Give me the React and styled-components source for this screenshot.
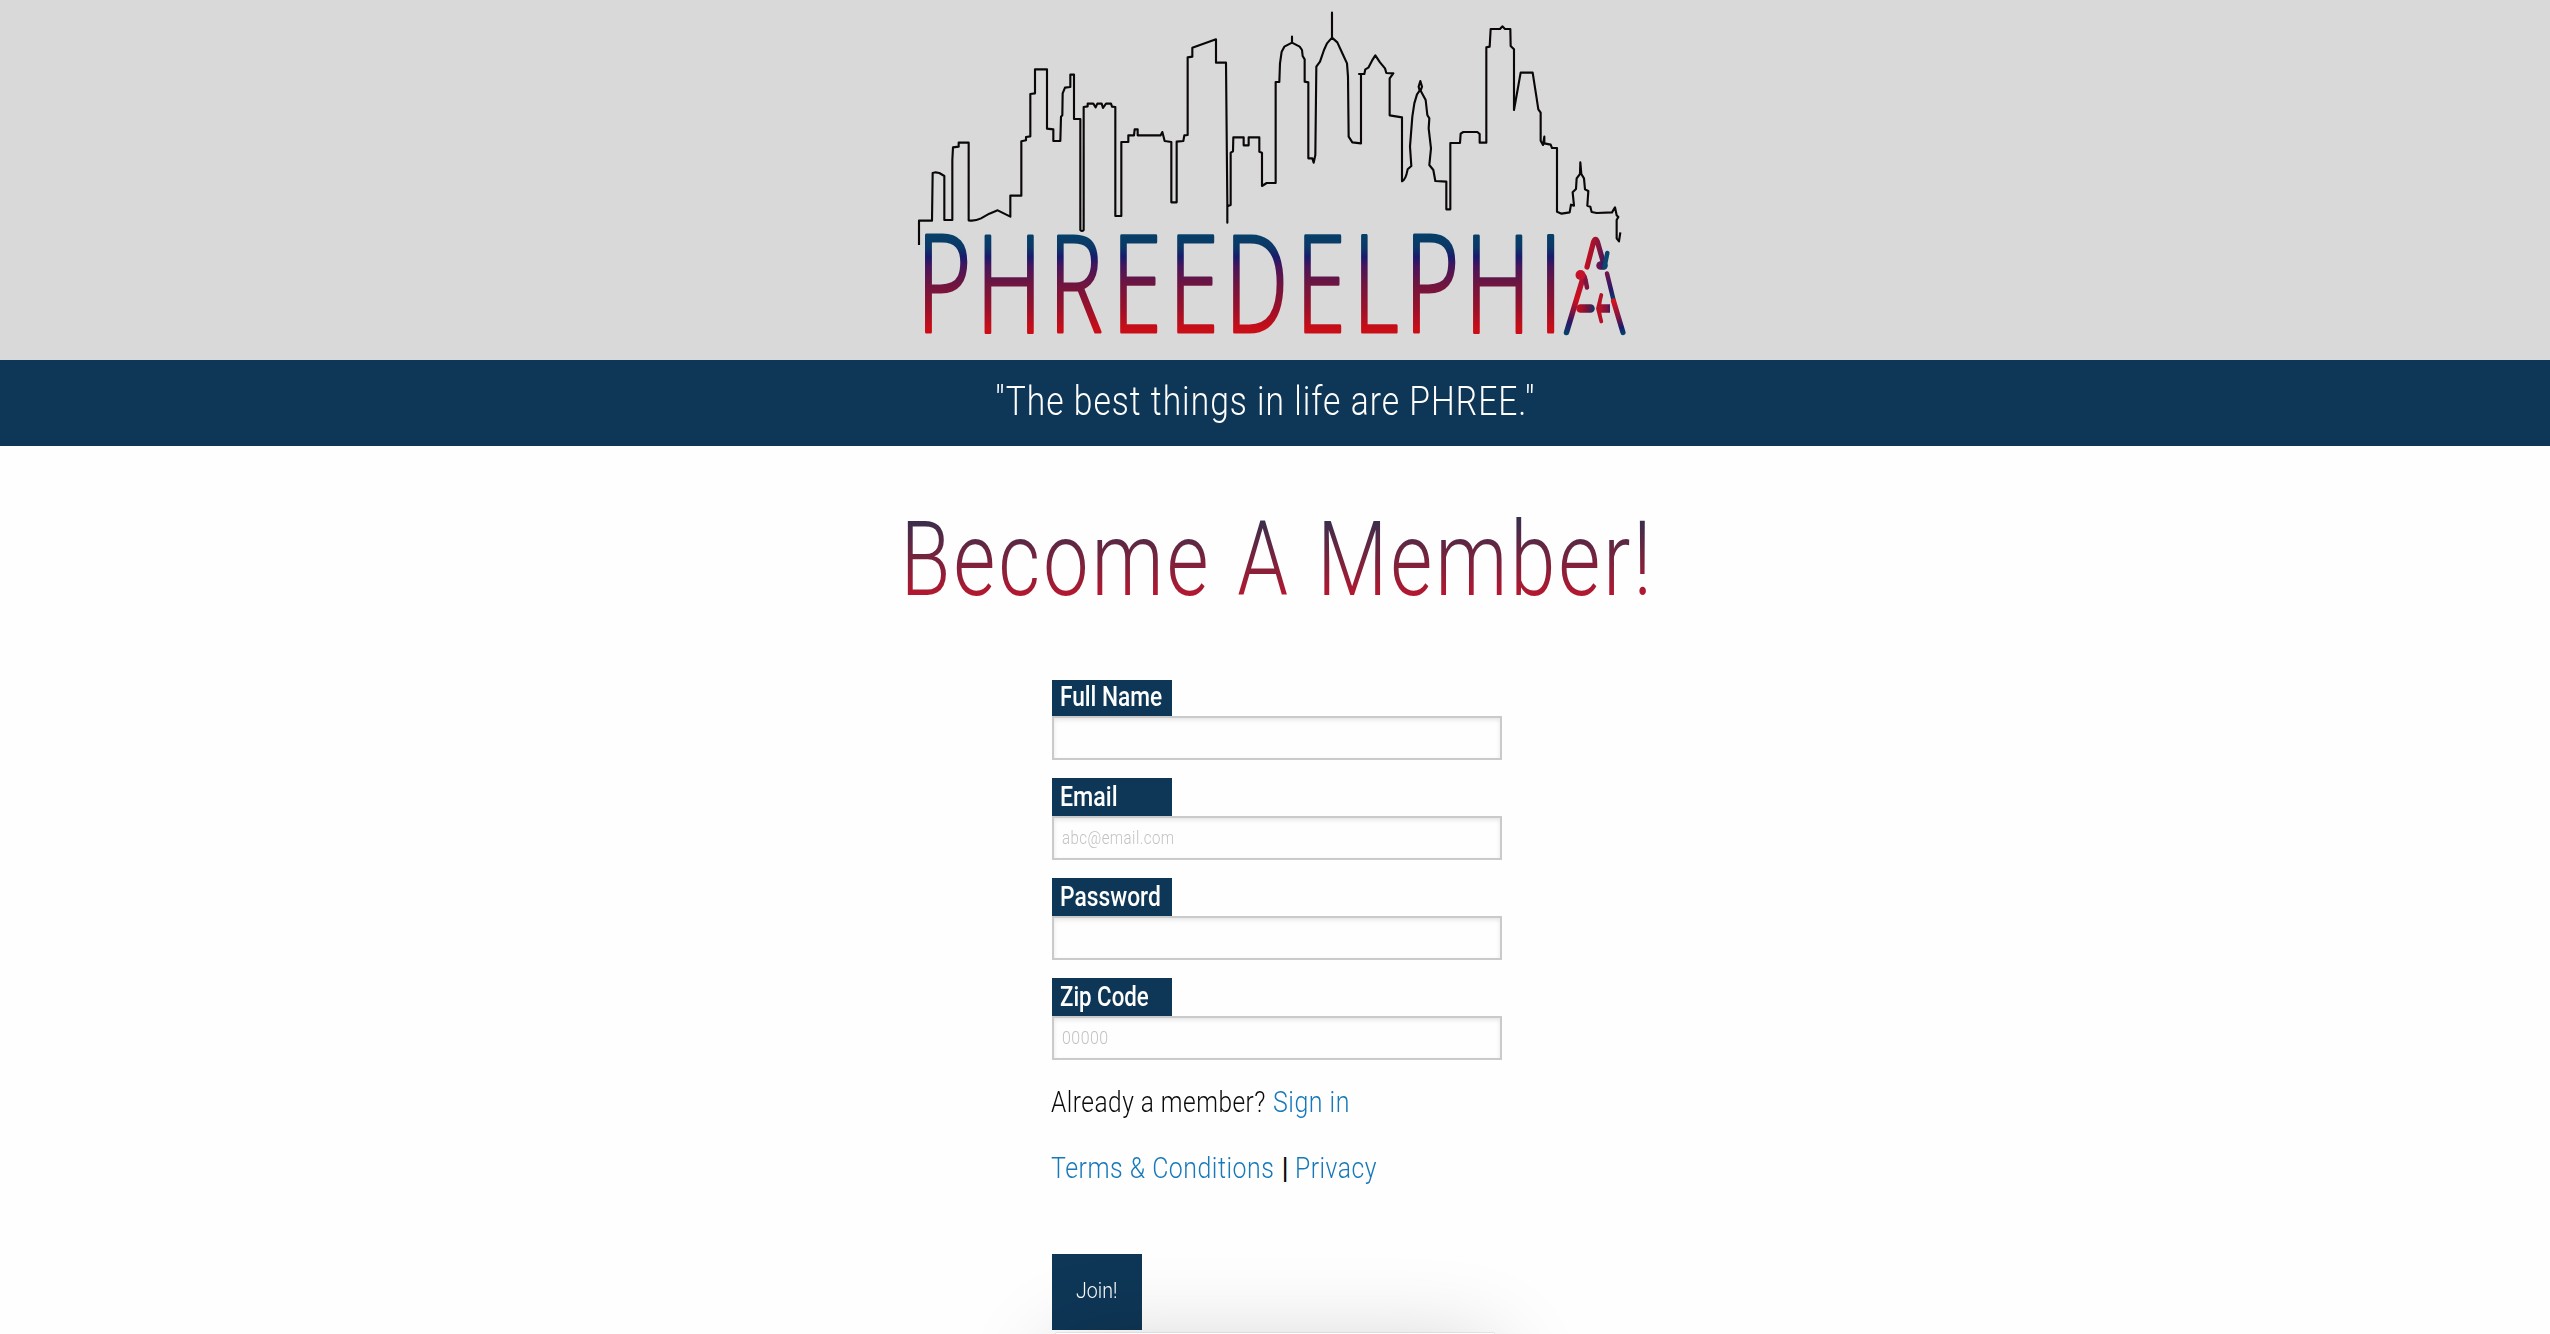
import React, { useLayoutEffect, useRef, useState } from "react";
import styled, { createGlobalStyle } from "styled-components";

const navy = "#0e3656";

const GlobalStyle = createGlobalStyle`
  * { box-sizing: border-box; }
  body { margin: 0; background: #fefefe; overflow: hidden; font-family: Roboto, "Open Sans", sans-serif; }
`;

const Page = styled.div`
  display: flex;
  flex-direction: column;
  align-items: center;
  height: 1334px;
  overflow: hidden;
  position: relative;
`;
const Header = styled.header`
  width: 100%;
  height: 360px;
  background: #d9d9d9;
  display: flex;
  justify-content: center;
`;
const Logo = styled.svg`
  display: block;
  width: 750px;
  height: 360px;
  overflow: visible;
`;
const Banner = styled.div`
  width: 100%;
  height: 86px;
  background: ${navy};
  color: #fefefe;
  display: flex;
  justify-content: center;
  padding: 17px 20px 0 0;
  font-size: 40.5px;
  font-weight: 300;
  line-height: 48px;
  letter-spacing: 0.03em;
`;
const Title = styled.h1`
  margin: 48px 0 0 5px;
  font-size: 103.5px;
  font-weight: 350;
  line-height: 132px;
  letter-spacing: 0.035em;
  word-spacing: 0.04em;
  color: transparent;
  background: linear-gradient(to bottom, ${navy}, #c8142a 86%);
  background-clip: text;
  -webkit-background-clip: text;
`;
const Form = styled.form`
  margin-top: 54px;
  width: 450px;
  margin-left: 4px;
  display: flex;
  flex-direction: column;
  align-items: flex-start;
`;
const Field = styled.div`
  display: flex;
  flex-direction: column;
  align-items: flex-start;
  margin-bottom: 18px;
`;
const Label = styled.label`
  width: 120px;
  height: ${(p) => (p.$short ? 36 : 38)}px;
  padding-left: 8px;
  background: ${navy};
  color: #fefefe;
  font-size: 28px;
  font-weight: 500;
  line-height: ${(p) => (p.$short ? 34 : 38)}px;
`;
const InputFrame = styled.div`
  display: grid;
  width: 450px;
  height: 44px;
  border: 2px solid #cacaca;
  background: #fefefe;
  box-shadow: inset 0 2px 4px rgba(10, 10, 10, 0.1);
`;
const Input = styled.input`
  grid-area: 1 / 1;
  min-width: 0;
  border: 0;
  outline: 0;
  background: transparent;
`;
const Hint = styled.span`
  grid-area: 1 / 1;
  padding-left: 8px;
  color: #c2c2c2;
  font-size: 19px;
  font-weight: 300;
  line-height: 39px;
  letter-spacing: 0.03em;
  pointer-events: none;
`;
const Line = styled.p`
  display: flex;
  margin: ${(p) => p.$top}px 0 0 -1px;
  font-size: 29.5px;
  font-weight: 300;
  line-height: 48px;
  letter-spacing: 0.02em;
  color: #0a0a0a;
`;
const Link = styled.a`
  color: #1779ba;
  margin-left: ${(p) => p.$gap || 0}px;
`;
const Bar = styled.span`
  width: 12px;
  margin-left: 5px;
  text-align: center;
  font-weight: 400;
  letter-spacing: 0;
`;
const Join = styled.button`
  margin-top: 62px;
  width: 90px;
  height: 76px;
  padding: 0 2px 3px 0;
  border: 0;
  background: ${navy};
  color: #fefefe;
  font-family: inherit;
  font-size: 21.5px;
  font-weight: 300;
`;
const Shade = styled.div`
  position: absolute;
  left: 1056px;
  top: 1333px;
  width: 438px;
  height: 200px;
  box-shadow: 0 16px 94px rgba(0, 0, 0, 0.2), 0 0 1px rgba(0, 0, 0, 0.4);
  pointer-events: none;
`;
const FitBox = styled.span`
  display: inline-block;
  white-space: nowrap;
  text-align: left;
`;
const FitInner = styled.span`
  display: inline-block;
  transform-origin: left center;
`;

function Fit({ width, children }) {
  const ref = useRef(null);
  const [scale, setScale] = useState(1);
  useLayoutEffect(() => {
    setScale(width / ref.current.offsetWidth);
  }, [width]);
  return (
    <FitBox style={{ width }}>
      <FitInner ref={ref} style={{ transform: `scaleX(${scale})` }}>{children}</FitInner>
    </FitBox>
  );
}

const FitTitle = styled(Title)`
  white-space: nowrap;
  width: max-content;
  transform-origin: center;
`;
function Heading({ width, children }) {
  const ref = useRef(null);
  const [scale, setScale] = useState(1);
  useLayoutEffect(() => {
    setScale(width / ref.current.offsetWidth);
  }, [width]);
  return <FitTitle ref={ref} style={{ transform: `scaleX(${scale})` }}>{children}</FitTitle>;
}

const skyline =
  "M57 735V662H96L98 519L107 517L118 519L133 528V660H157V480L159 442L176 440V428H206V661Q225 664 243 655L268 641L293 631L331 650V587H364V424L378 421V411L391 409V282L405 280V208H441V386L460 388V423H481L483 350L487 346L488 280L495 263L511 261V224H522V357H541V690Q546 696 551 690V321L563 319V311H580L587 322L592 311H605L609 324L618 311H633L636 320L646 321V648H664V426H685V406H702L704 388H713V406H782L787 396L794 423L814 426V607H830V425L850 423L853 406L863 405V172L877 170V143L948 118V188H978L982 610V668V619L992 615V458L999 454L1000 412H1031V436H1046V412H1078V455L1086 458V558L1100 549H1127V246H1138L1140 190L1145 155L1153 140L1176 128V110V128L1199 140L1206 150L1208 168L1214 178V245L1225 247V475H1237L1241 488L1246 465L1249 200L1260 185L1272 150L1281 130L1296 113V38V113L1312 127L1328 162L1341 190L1344 230L1346 410L1357 427L1383 430V222H1377H1393L1396 208L1405 203L1416 182L1426 166L1440 187L1455 205L1459 219L1480 220L1469 235V346L1506 352V544Q1517 540 1523 508L1534 498L1530 440L1537 350L1543 310L1551 283L1559 272L1556 260L1561 243L1566 260L1562 272L1577 300L1582 345L1588 355L1586 385L1593 445L1588 495L1600 510L1606 543L1639 545V628H1651V429H1680L1682 401L1690 396H1732L1739 402V428H1759V142L1769 140L1772 87H1800L1807 79L1815 87H1831L1832 138L1842 148V330L1862 218H1898L1910 295L1915 328L1922 338V422L1929 435L1933 410V430L1952 434L1956 444H1971V635L1985 641L2009 637L2013 614L2022 617L2018 577L2028 567L2030 535L2040 522L2041 487L2044 522L2052 535L2055 568L2065 573L2062 617L2071 620L2075 636L2090 639L2136 637L2145 622L2150 646L2155 651L2150 660V715L2157 724L2161 697";

const letters = [
  ["P", 925, 42], ["H", 984.5, 49], ["R", 1057, 46], ["E", 1120, 37], ["E", 1177, 37],
  ["D", 1233, 51], ["E", 1304, 37], ["L", 1361, 36], ["P", 1413, 42], ["H", 1473, 49], ["I", 1547, 7],
];
// Ink box of each Open Sans Light capital: left bearing and width, in em.
const ink = {
  P: [0.099, 0.429], H: [0.099, 0.517], R: [0.099, 0.488], E: [0.099, 0.391],
  D: [0.099, 0.552], L: [0.099, 0.385], I: [0.099, 0.052],
};

function Brand() {
  const size = 134;
  return (
    <Logo viewBox="900 0 750 360" role="img" aria-label="Phreedelphia">
      <defs>
        <linearGradient id="ink" gradientUnits="userSpaceOnUse" x1="0" y1="235" x2="0" y2="334">
          <stop offset="0" stopColor="#064068" />
          <stop offset="0.12" stopColor="#0b3867" />
          <stop offset="0.22" stopColor="#191b6c" />
          <stop offset="0.32" stopColor="#48155a" />
          <stop offset="0.5" stopColor="#6f153f" />
          <stop offset="0.75" stopColor="#9c1029" />
          <stop offset="0.95" stopColor="#c90e17" />
        </linearGradient>
        <linearGradient id="legL" gradientUnits="userSpaceOnUse" x1="1584" y1="275" x2="1566" y2="334">
          <stop offset="0" stopColor="#a0153a" /><stop offset="0.4" stopColor="#d00e1c" />
          <stop offset="0.62" stopColor="#80153f" /><stop offset="0.8" stopColor="#2b1768" /><stop offset="1" stopColor="#064068" />
        </linearGradient>
        <linearGradient id="legR" gradientUnits="userSpaceOnUse" x1="1613" y1="300" x2="1624" y2="334">
          <stop offset="0" stopColor="#d9141c" /><stop offset="0.5" stopColor="#80153f" />
          <stop offset="0.8" stopColor="#191b6c" /><stop offset="1" stopColor="#064068" />
        </linearGradient>
        <linearGradient id="armR" gradientUnits="userSpaceOnUse" x1="1607" y1="273" x2="1614" y2="300">
          <stop offset="0" stopColor="#6f154f" /><stop offset="0.6" stopColor="#2b1768" /><stop offset="1" stopColor="#064068" />
        </linearGradient>
        <linearGradient id="top" gradientUnits="userSpaceOnUse" x1="1586" y1="255" x2="1608" y2="258">
          <stop offset="0" stopColor="#c90e1c" /><stop offset="0.55" stopColor="#80153f" />
          <stop offset="0.85" stopColor="#3b1760" /><stop offset="1" stopColor="#064068" />
        </linearGradient>
        <linearGradient id="hook" gradientUnits="userSpaceOnUse" x1="1598" y1="0" x2="1608" y2="0">
          <stop offset="0" stopColor="#6f154f" /><stop offset="0.6" stopColor="#2b1768" /><stop offset="1" stopColor="#0b3867" />
        </linearGradient>
        <linearGradient id="barL" gradientUnits="userSpaceOnUse" x1="1577" y1="0" x2="1595" y2="0">
          <stop offset="0" stopColor="#c90e1c" /><stop offset="0.6" stopColor="#6f153f" /><stop offset="1" stopColor="#0b3867" />
        </linearGradient>
        <linearGradient id="barR" gradientUnits="userSpaceOnUse" x1="1597" y1="0" x2="1613" y2="0">
          <stop offset="0" stopColor="#c90e1c" /><stop offset="0.6" stopColor="#80153f" /><stop offset="1" stopColor="#191b6c" />
        </linearGradient>
      </defs>
      <path d={skyline} transform="translate(900 0) scale(0.33333)" fill="none" stroke="#0b0708" strokeWidth="6.4" strokeLinejoin="round" />
      <g fill="url(#ink)" stroke="url(#ink)" strokeWidth="3.2" strokeLinejoin="round" fontFamily="Open Sans" fontWeight="300" fontSize={size}>
        {letters.map(([c, x, w]) => {
          const [lsb, iw] = ink[c];
          const s = c === "I" ? 0.72 : (w - 2) / (iw * size);
          return (
            <text key={x} y="332.2" transform={`translate(${x + 1 - lsb * size * s} 0) scale(${s} 1)`}>{c}</text>
          );
        })}
      </g>
      <g fill="none" strokeLinecap="round" strokeLinejoin="round">
        <path d="M1566.5 332.500L1583 278" stroke="url(#legL)" strokeWidth="5.500" />
        <path d="M1580 274.500Q1585 274 1585.500 280L1587 287.500" stroke="#80143f" strokeWidth="4.500" />
        <circle cx="1580.500" cy="275" r="5" fill="#c4122a" />
        <path d="M1587 267L1593.500 242Q1595.500 236.500 1597.500 242L1603.500 263" stroke="url(#top)" strokeWidth="5.200" />
        <path d="M1600.500 265.500H1603.500" stroke="url(#hook)" strokeWidth="8.500" />
        <path d="M1607.300 253L1604.500 267" stroke="#0b4670" strokeWidth="4.500" />
        <path d="M1607 273.500L1613.500 300" stroke="url(#armR)" strokeWidth="4.500" />
        <path d="M1580.500 308.500H1590.500" stroke="url(#barL)" strokeWidth="8.500" />
        <path d="M1600 308.500H1610" stroke="url(#barR)" strokeWidth="8.500" strokeLinecap="butt" />
        <path d="M1613.500 301L1623 332.500" stroke="url(#legR)" strokeWidth="5.200" />
        <path d="M1601.300 295L1598 308.500L1601.300 321.500" fill="#b51228" stroke="#b51228" strokeWidth="3.800" />
      </g>
    </Logo>
  );
}

const fields = [
  { label: "Full Name", width: 102, type: "text" },
  { label: "Email", width: 58, type: "email", hint: "abc@email.com", hintWidth: 113 },
  { label: "Password", width: 101, type: "password" },
  { label: "Zip Code", width: 89, type: "text", hint: "00000", hintWidth: 47 },
];

export default function App() {
  return (
    <Page>
      <GlobalStyle />
      <Header><Brand /></Header>
      <Banner><Fit width={540}>"The best things in life are PHREE."</Fit></Banner>
      <Heading width={754}>Become A Member!</Heading>
      <Form>
        {fields.map((f, i) => (
          <Field key={f.label}>
            <Label $short={i === 0}><Fit width={f.width}>{f.label}</Fit></Label>
            <InputFrame>
              <Input type={f.type} aria-label={f.label} />
              {f.hint && <Hint><Fit width={f.hintWidth}>{f.hint}</Fit></Hint>}
            </InputFrame>
          </Field>
        ))}
        <Line $top={0}>
          <Fit width={215}>Already a member?</Fit>
          <Link $gap={7}><Fit width={77}>Sign in</Fit></Link>
        </Line>
        <Line $top={18}>
          <Link><Fit width={223}>Terms &amp; Conditions</Fit></Link>
          <Bar>|</Bar>
          <Link $gap={4}><Fit width={82}>Privacy</Fit></Link>
        </Line>
        <Join type="button"><Fit width={41}>Join!</Fit></Join>
      </Form>
      <Shade />
    </Page>
  );
}
